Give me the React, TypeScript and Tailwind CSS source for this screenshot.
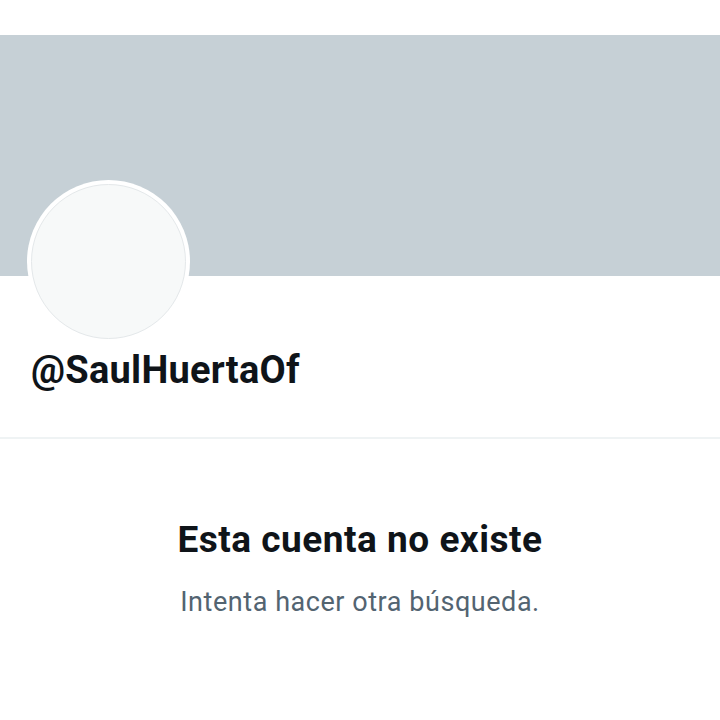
export default function App() {
  return (
    <div className="w-[720px] h-[720px] bg-white overflow-hidden" style={{ fontFamily: "Roboto, 'Liberation Sans', sans-serif" }}>
      <div className="h-[35px]" />
      <div className="relative h-[241px] bg-[#c6d0d6]">
        <div className="absolute left-[27px] top-[145px] w-[163px] h-[163px] rounded-full bg-white p-[4px]">
          <div className="w-full h-full rounded-full bg-[#f7f9f9] border border-[#e4e8ea]" />
        </div>
      </div>
      <div className="h-[163px] border-b-2 border-[#eff3f4] pt-[72px] pl-[31px]">
        <div className="text-[38px] font-bold text-[#0f1419] leading-[44px] tracking-[0.25px]">@SaulHuertaOf</div>
      </div>
      <div className="flex flex-col items-center pt-[79px]">
        <div className="text-[37px] font-bold text-[#0f1419] leading-[44px] tracking-[0.5px]">Esta cuenta no existe</div>
        <div className="mt-[24px] text-[27px] text-[#536471] leading-[32px] tracking-[0.55px]">Intenta hacer otra búsqueda.</div>
      </div>
    </div>
  );
}
